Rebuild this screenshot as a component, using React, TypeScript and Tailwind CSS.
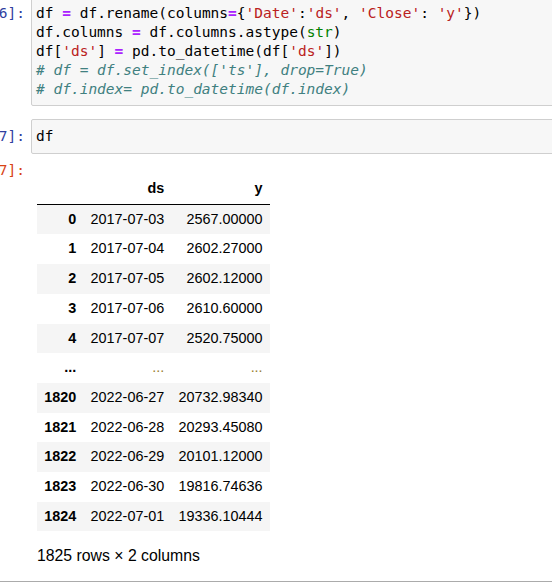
const MONO = "font-['DejaVu_Sans_Mono',monospace] text-[14.5px] leading-[19px]";
const SANS = "font-['Liberation_Sans',Arial,sans-serif] text-[14.4px]";

function Op({ children }: { children: React.ReactNode }) {
  return <span className="font-bold text-[#aa22ff]">{children}</span>;
}
function Str({ children }: { children: React.ReactNode }) {
  return <span className="text-[#ba2121]">{children}</span>;
}
function Cm({ children }: { children: React.ReactNode }) {
  return <span className="italic text-[#408080]">{children}</span>;
}

type Row = { idx: string; ds: string; y: string };

const ROWS: Row[] = [
  { idx: "0", ds: "2017-07-03", y: "2567.00000" },
  { idx: "1", ds: "2017-07-04", y: "2602.27000" },
  { idx: "2", ds: "2017-07-05", y: "2602.12000" },
  { idx: "3", ds: "2017-07-06", y: "2610.60000" },
  { idx: "4", ds: "2017-07-07", y: "2520.75000" },
  { idx: "...", ds: "...", y: "..." },
  { idx: "1820", ds: "2022-06-27", y: "20732.98340" },
  { idx: "1821", ds: "2022-06-28", y: "20293.45080" },
  { idx: "1822", ds: "2022-06-29", y: "20101.12000" },
  { idx: "1823", ds: "2022-06-30", y: "19816.74636" },
  { idx: "1824", ds: "2022-07-01", y: "19336.10444" },
];

function Prompt({ text, out, pt }: { text: string; out?: boolean; pt: string }) {
  return (
    <div
      className={`w-[31px] shrink-0 flex justify-end overflow-hidden whitespace-nowrap pr-[6px] ${pt} ${MONO} ${
        out ? "text-[#d84315]" : "text-[#303f9f]"
      }`}
    >
      <span className="shrink-0">{text}</span>
    </div>
  );
}

export default function App() {
  return (
    <div className="w-[552px] h-[585px] overflow-hidden bg-white text-black">
      {/* In [6] */}
      <div className="flex -mt-[3px]">
        <Prompt text="6]:" pt="pt-[7px]" />
        <div
          className={`flex-1 -mr-[20px] border border-[#cfcfcf] bg-[#f7f7f7] rounded-[2px] pl-[4px] py-[6px] whitespace-pre ${MONO}`}
        >
          <div>
            df <Op>=</Op> df.rename(columns<Op>=</Op>{"{"}
            <Str>'Date'</Str>:<Str>'ds'</Str>, <Str>'Close'</Str>: <Str>'y'</Str>
            {"})"}
          </div>
          <div>
            df.columns <Op>=</Op> df.columns.astype(<span className="text-[#008000]">str</span>)
          </div>
          <div>
            df[<Str>'ds'</Str>] <Op>=</Op> pd.to_datetime(df[<Str>'ds'</Str>])
          </div>
          <div>
            <Cm># df = df.set_index(['ts'], drop=True)</Cm>
          </div>
          <div>
            <Cm># df.index= pd.to_datetime(df.index)</Cm>
          </div>
        </div>
      </div>

      {/* In [7] */}
      <div className="flex mt-[13px]">
        <Prompt text="7]:" pt="pt-[8px]" />
        <div
          className={`flex-1 -mr-[20px] border border-[#cfcfcf] bg-[#f7f7f7] rounded-[2px] pl-[4px] py-[7px] whitespace-pre ${MONO}`}
        >
          df
        </div>
      </div>

      {/* Out [7] */}
      <div className="flex border-b border-[#ababab] pb-[16px]">
        <Prompt text="7]:" out pt="pt-[7px]" />
        <div className={`pl-[6px] pt-[20px] ${SANS}`}>
          <table className="border-collapse">
            <thead>
              <tr className="border-b border-black">
                <th className="px-[7.2px] py-[7px] leading-[15.7px]"></th>
                <th className="px-[7.2px] py-[7px] leading-[15.7px] text-right font-bold">ds</th>
                <th className="px-[7.2px] py-[7px] leading-[15.7px] text-right font-bold">y</th>
              </tr>
            </thead>
            <tbody>
              {ROWS.map((r, i) => {
                const dots = r.idx === "...";
                return (
                  <tr key={r.idx} className={i % 2 === 0 ? "bg-[#f5f5f5]" : "bg-white"}>
                    <th className="px-[7.2px] py-[7px] leading-[15.7px] text-right font-bold whitespace-nowrap">
                      {r.idx}
                    </th>
                    <td
                      className={`px-[7.2px] py-[7px] leading-[15.7px] text-right whitespace-nowrap ${
                        dots ? "text-[#9a8030]" : ""
                      }`}
                    >
                      {r.ds}
                    </td>
                    <td
                      className={`px-[7.2px] py-[7px] leading-[15.7px] text-right whitespace-nowrap ${
                        dots ? "text-[#9a8030]" : ""
                      }`}
                    >
                      {r.y}
                    </td>
                  </tr>
                );
              })}
            </tbody>
          </table>
          <p className="mt-[16px] text-[15.8px] leading-[18px]">1825 rows × 2 columns</p>
        </div>
      </div>
    </div>
  );
}
